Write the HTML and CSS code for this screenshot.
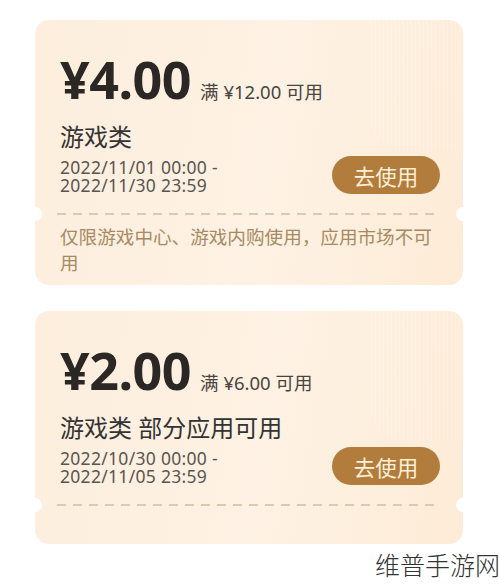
FILE: index.html
```html
<!DOCTYPE html>
<html>
<head>
    <title>优惠券</title>
    <link rel="stylesheet" href="styles.css">
</head>
<body>
    <div class="list">
        <div class="coupon">
            <div class="main">
                <div class="head">
                    <span class="price">¥4.00</span>
                    <span class="cond">满 ¥12.00 可用</span>
                </div>
                <div class="title">游戏类</div>
                <div class="row">
                    <div class="dates">2022/11/01 00:00 -<br>2022/11/30 23:59</div>
                    <button class="use">去使用</button>
                </div>
            </div>
            <div class="cut"></div>
            <div class="note">仅限游戏中心、游戏内购使用，应用市场不可用</div>
        </div>

        <div class="coupon">
            <div class="main">
                <div class="head">
                    <span class="price">¥2.00</span>
                    <span class="cond">满 ¥6.00 可用</span>
                </div>
                <div class="title">游戏类 部分应用可用</div>
                <div class="row">
                    <div class="dates">2022/10/30 00:00 -<br>2022/11/05 23:59</div>
                    <button class="use">去使用</button>
                </div>
            </div>
            <div class="cut"></div>
            <div class="note empty"></div>
        </div>
    </div>
    <div class="mark">维普手游网</div>
</body>
</html>
```

FILE: styles.css
```css
body { margin: 0; background: #fff; font-family: "Noto Sans", "Noto Sans CJK SC", sans-serif; color: #3a3430; }
.list { display: flex; flex-direction: column; gap: 26px; padding: 20px 37px 0 35px; }
.coupon { position: relative; background: linear-gradient(100deg, #fdeedd 0%, #fef2e4 55%, #fdebd6 100%); border-radius: 14px; overflow: hidden; }
.coupon::before { content: ""; position: absolute; top: 0; right: 0; width: 95px; height: 130px; background: repeating-linear-gradient(90deg, rgba(255,255,255,0) 0 3px, rgba(255,255,255,0.4) 3px 4px); border-radius: 0 14px 0 40px; opacity: 0.55; }
.main { position: relative; padding: 31px 23px 0 25px; }
.head { display: flex; align-items: baseline; gap: 9px; }
.price { font-size: 52px; font-weight: 700; line-height: 56px; color: #2b2724; letter-spacing: -0.5px; }
.cond { font-size: 18.5px; color: #4a4440; }
.title { font-size: 24px; line-height: 28px; margin-top: 16px; color: #333; }
.title-gap { margin-left: 4px; }
.row { display: flex; justify-content: space-between; align-items: center; margin-top: 5px; }
.dates { font-size: 17.5px; line-height: 18px; letter-spacing: 0.3px; color: #5b5550; padding-top: 1px; }
.use { width: 108px; height: 38px; border: none; border-radius: 19px; background: #b27c3c; color: #fdf0d8; font-family: inherit; font-size: 21.5px; padding: 0; }
.cut { position: relative; height: 2px; margin: 19px 23px 0 22px; background: repeating-linear-gradient(90deg, #dcc9b0 0 9px, transparent 9px 16px); }
.cut::before, .cut::after { content: ""; position: absolute; top: -6px; width: 14px; height: 14px; border-radius: 50%; background: #fff; }
.cut::before { left: -29px; }
.cut::after { right: -30px; }
.note { padding: 9px 25px; font-size: 18.6px; line-height: 26px; color: #a88a62; }
.note.empty { height: 38px; padding: 0; }
.mark { text-align: right; padding: 6px 0 0 0; font-size: 25px; line-height: 30px; font-weight: 300; color: #333; }
```
